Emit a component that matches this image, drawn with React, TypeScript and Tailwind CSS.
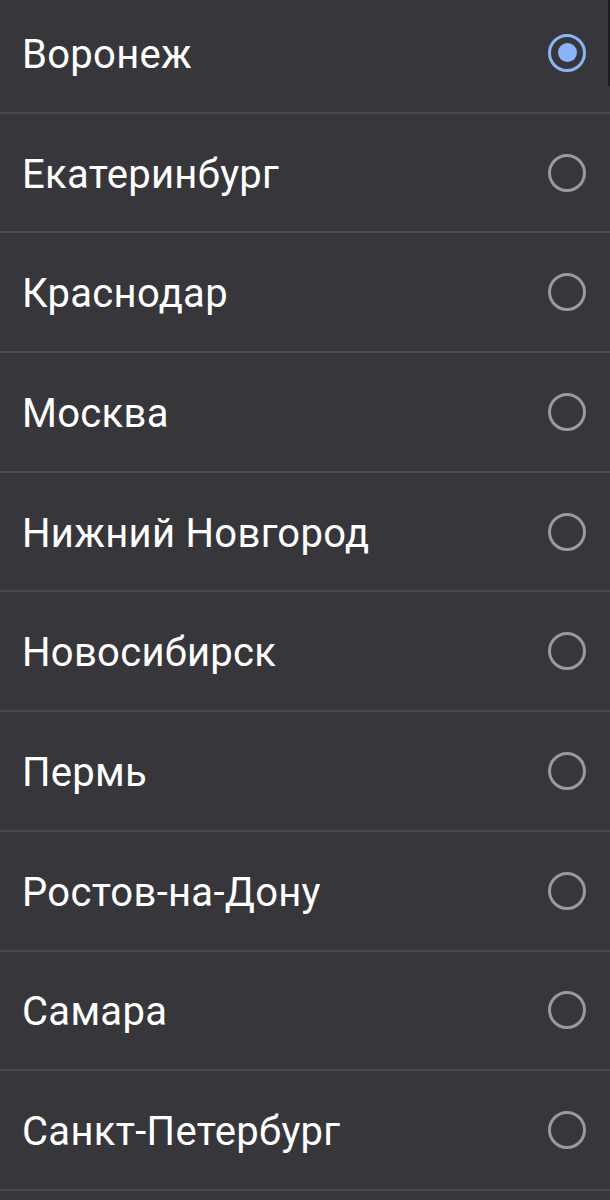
import React, { useState } from 'react';

const cities = [
  'Воронеж',
  'Екатеринбург',
  'Краснодар',
  'Москва',
  'Нижний Новгород',
  'Новосибирск',
  'Пермь',
  'Ростов-на-Дону',
  'Самара',
  'Санкт-Петербург',
];

const Radio = ({ checked }: { checked: boolean }) =>
  checked ? (
    <span className="w-[38px] h-[38px] rounded-full border-[3px] border-[#8ab4f8] flex items-center justify-center">
      <span className="w-[19px] h-[19px] rounded-full bg-[#8ab4f8]" />
    </span>
  ) : (
    <span className="w-[38px] h-[38px] rounded-full border-[3px] border-[#9a9a9d]" />
  );

const App: React.FC = () => {
  const [selected, setSelected] = useState('Воронеж');

  return (
    <div className="relative w-[610px] h-[1200px] overflow-hidden bg-[#37363b]" style={{ fontFamily: 'Roboto, "Noto Sans", sans-serif' }}>
      <div className="-mt-[6px]">
        {cities.map((city) => (
          <button
            key={city}
            onClick={() => setSelected(city)}
            className="w-full h-[119.7px] flex items-center justify-between pl-[22px] pr-[24px] border-b-2 border-[#4b4a50] text-left"
          >
            <span className="text-[40px] leading-none text-white tracking-[0.3px] pt-[4px]">{city}</span>
            <Radio checked={selected === city} />
          </button>
        ))}
      </div>
      <div className="absolute top-0 right-0 w-[2px] h-[86px] bg-[#1c1b1f]" />
    </div>
  );
};

export default App;
